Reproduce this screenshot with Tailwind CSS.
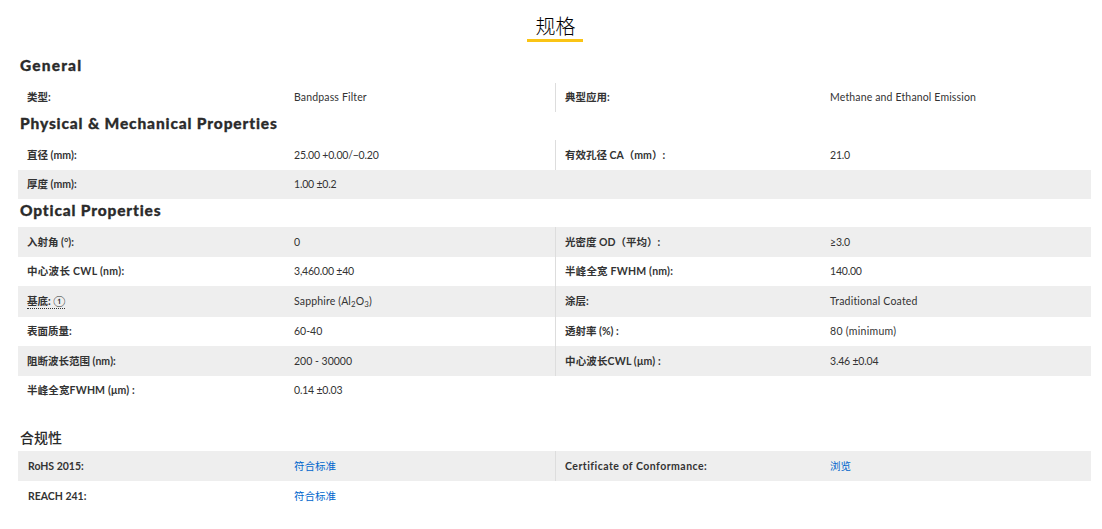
<!DOCTYPE html>
<html lang="zh">
<head>
    <meta charset="UTF-8">
    <title>规格</title>
    <script src="https://cdn.jsdelivr.net/npm/@tailwindcss/browser@4"></script>
</head>
<body class="bg-white font-['Lato','Noto_Sans_CJK_SC',sans-serif] text-[10.5px] text-[#333333] overflow-hidden">

<div class="w-[1102px] h-[529px] pl-[18px] pr-[11px]">

    <!-- Title -->
    <div class="flex justify-center h-[52px] pt-[13px]">
        <h2 class="h-[29px] pl-[9px] pr-[7px] border-b-[3px] border-[#fac415] text-[20px] leading-[26px] font-light text-black">规格</h2>
    </div>

    <!-- General -->
    <h3 class="h-[31px] pl-[2px] pt-[3px] text-[15.5px] leading-[20px] font-black tracking-[1.15px] [-webkit-text-stroke:0.3px] text-[#2b2b2b]">General</h3>
    <div class="grid grid-cols-[267px_270px_266px_270px]">
        <div class="h-[29px] pl-[9px] flex items-center font-bold">类型:</div>
        <div class="h-[29px] pl-[9px] flex items-center tracking-[0.15px]">Bandpass Filter</div>
        <div class="h-[29px] pl-[9px] flex items-center font-bold border-l border-[#dddddd]">典型应用:</div>
        <div class="h-[29px] pl-[9px] flex items-center tracking-[0.15px]">Methane and Ethanol Emission</div>
    </div>

    <!-- Physical -->
    <h3 class="h-[28px] pl-[2px] pt-[1px] text-[15.5px] leading-[20px] font-black tracking-[0.85px] [-webkit-text-stroke:0.3px] text-[#2b2b2b]">Physical &amp; Mechanical Properties</h3>
    <div class="grid grid-cols-[267px_270px_266px_270px]">
        <div class="h-[30px] pl-[9px] pt-[2px] flex items-center font-bold">直径 (mm):</div>
        <div class="h-[30px] pl-[9px] pt-[2px] flex items-center tracking-[-0.2px]">25.00 +0.00/−0.20</div>
        <div class="h-[30px] pl-[9px] pt-[2px] flex items-center font-bold border-l border-[#dddddd]">有效孔径 CA（mm）:</div>
        <div class="h-[30px] pl-[9px] pt-[2px] flex items-center tracking-[-0.2px]">21.0</div>
    </div>
    <div class="grid grid-cols-[267px_270px_266px_270px] bg-[#eeeeee]">
        <div class="h-[29px] pl-[9px] flex items-center font-bold">厚度 (mm):</div>
        <div class="h-[29px] pl-[9px] flex items-center tracking-[-0.2px]">1.00 ±0.2</div>
    </div>

    <!-- Optical -->
    <h3 class="h-[28px] pl-[2px] pt-[1px] text-[15.5px] leading-[20px] font-black tracking-[0.83px] [-webkit-text-stroke:0.3px] text-[#2b2b2b]">Optical Properties</h3>
    <div class="grid grid-cols-[267px_270px_266px_270px] bg-[#eeeeee]">
        <div class="h-[30px] pl-[9px] pt-[2px] flex items-center font-bold">入射角 (°):</div>
        <div class="h-[30px] pl-[9px] pt-[2px] flex items-center">0</div>
        <div class="h-[30px] pl-[9px] pt-[2px] flex items-center font-bold border-l border-[#dddddd]">光密度 OD（平均）:</div>
        <div class="h-[30px] pl-[9px] pt-[2px] flex items-center tracking-[-0.2px]">≥3.0</div>
    </div>
    <div class="grid grid-cols-[267px_270px_266px_270px]">
        <div class="h-[29px] pl-[9px] flex items-center font-bold tracking-[0.3px]">中心波长 CWL (nm):</div>
        <div class="h-[29px] pl-[9px] flex items-center tracking-[-0.2px]">3,460.00 ±40</div>
        <div class="h-[29px] pl-[9px] flex items-center font-bold tracking-[0.2px] border-l border-[#dddddd]">半峰全宽 FWHM (nm):</div>
        <div class="h-[29px] pl-[9px] flex items-center tracking-[-0.2px]">140.00</div>
    </div>
    <div class="grid grid-cols-[267px_270px_266px_270px] bg-[#eeeeee]">
        <div class="h-[31px] pl-[9px] flex items-center font-bold"><span class="border-b border-dotted border-[#333333] leading-[13px]">基底: <span class="font-normal">①</span></span></div>
        <div class="h-[31px] pl-[9px] flex items-center tracking-[0.15px]"><span>Sapphire (Al<sub>2</sub>O<sub>3</sub>)</span></div>
        <div class="h-[31px] pl-[9px] flex items-center font-bold border-l border-[#dddddd]">涂层:</div>
        <div class="h-[31px] pl-[9px] flex items-center tracking-[0.2px]">Traditional Coated</div>
    </div>
    <div class="grid grid-cols-[267px_270px_266px_270px]">
        <div class="h-[29px] pl-[9px] flex items-center font-bold">表面质量:</div>
        <div class="h-[29px] pl-[9px] flex items-center">60-40</div>
        <div class="h-[29px] pl-[9px] flex items-center font-bold border-l border-[#dddddd]">透射率 (%) :</div>
        <div class="h-[29px] pl-[9px] flex items-center tracking-[0.3px]">80 (minimum)</div>
    </div>
    <div class="grid grid-cols-[267px_270px_266px_270px] bg-[#eeeeee]">
        <div class="h-[30px] pl-[9px] pt-[2px] flex items-center font-bold">阻断波长范围 (nm):</div>
        <div class="h-[30px] pl-[9px] pt-[2px] flex items-center">200 - 30000</div>
        <div class="h-[30px] pl-[9px] pt-[2px] flex items-center font-bold tracking-[0.15px] border-l border-[#dddddd]">中心波长CWL (μm) :</div>
        <div class="h-[30px] pl-[9px] pt-[2px] flex items-center tracking-[-0.2px]">3.46 ±0.04</div>
    </div>
    <div class="grid grid-cols-[267px_270px_266px_270px]">
        <div class="h-[29px] pl-[9px] flex items-center font-bold tracking-[0.15px]">半峰全宽FWHM (μm) :</div>
        <div class="h-[29px] pl-[9px] flex items-center tracking-[-0.2px]">0.14 ±0.03</div>
    </div>

    <!-- Compliance -->
    <h3 class="h-[46px] pl-[2px] pt-[24px] text-[14px] leading-[18px] font-medium text-[#2b2b2b]">合规性</h3>
    <div class="grid grid-cols-[267px_270px_266px_270px] bg-[#eeeeee]">
        <div class="h-[30px] pl-[10px] pt-[2px] flex items-center font-bold">RoHS 2015:</div>
        <div class="h-[30px] pl-[9px] pt-[2px] flex items-center text-[#0066cc]">符合标准</div>
        <div class="h-[30px] pl-[9px] pt-[2px] flex items-center font-bold tracking-[0.48px] border-l border-[#dddddd]">Certificate of Conformance:</div>
        <div class="h-[30px] pl-[9px] pt-[2px] flex items-center text-[#0066cc]">浏览</div>
    </div>
    <div class="grid grid-cols-[267px_270px_266px_270px]">
        <div class="h-[30px] pl-[10px] pt-[2px] flex items-center font-bold">REACH 241:</div>
        <div class="h-[30px] pl-[9px] pt-[2px] flex items-center text-[#0066cc]">符合标准</div>
    </div>
</div>

</body>
</html>
